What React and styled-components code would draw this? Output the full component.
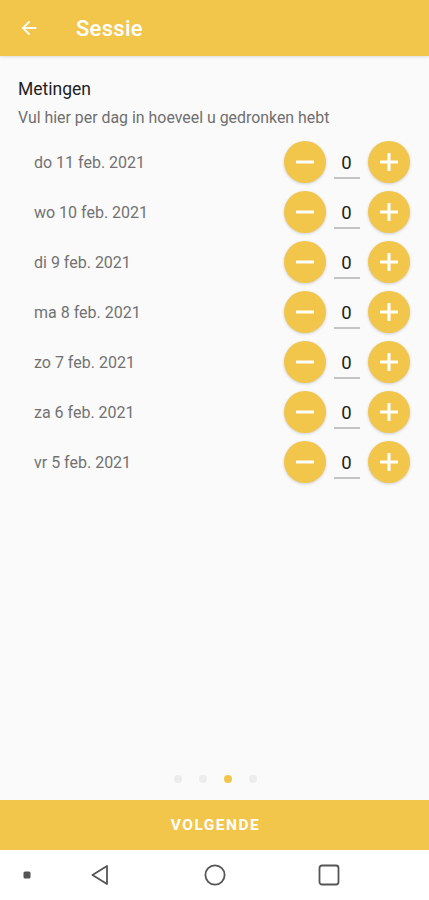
import React, { useState } from 'react';
import styled, { createGlobalStyle } from 'styled-components';

const GlobalStyle = createGlobalStyle`
  html, body {
    margin: 0;
    padding: 0;
    background: #fafafa;
  }
  * {
    box-sizing: border-box;
  }
`;

const YELLOW = '#f2c64b';

const Screen = styled.div`
  width: 429px;
  height: 900px;
  display: flex;
  flex-direction: column;
  background: #fafafa;
  font-family: Roboto, "Noto Sans", sans-serif;
`;

const AppBar = styled.header`
  height: 56px;
  background: ${YELLOW};
  display: flex;
  align-items: center;
  padding-left: 18px;
  box-shadow: 0 1px 3px rgba(0, 0, 0, 0.12);
`;

const BackButton = styled.div`
  width: 22px;
  height: 22px;
  display: flex;
  align-items: center;
  justify-content: center;
  margin-right: 36px;
`;

const Title = styled.h1`
  margin: 0;
  color: #fff;
  font-size: 22px;
  font-weight: 500;
  letter-spacing: 0.3px;
`;

const Content = styled.main`
  flex: 1;
  display: flex;
  flex-direction: column;
  padding: 22px 20px 0 18px;
`;

const Heading = styled.h2`
  margin: 0;
  font-size: 17.5px;
  font-weight: 400;
  color: #232323;
  line-height: 22px;
`;

const Subtitle = styled.p`
  margin: 8px 0 0;
  font-size: 15.9px;
  color: #6f6f6f;
  line-height: 20px;
`;

const List = styled.div`
  display: flex;
  flex-direction: column;
  margin-top: 9px;
`;

const Row = styled.div`
  height: 50px;
  display: flex;
  align-items: center;
  justify-content: space-between;
  padding-left: 16px;
`;

const DateLabel = styled.span`
  font-size: 16px;
  color: #727272;
`;

const Counter = styled.div`
  display: flex;
  align-items: center;
  gap: 8px;
  margin-right: -1px;
`;

const RoundButton = styled.button`
  width: 42px;
  height: 42px;
  border-radius: 50%;
  border: none;
  padding: 0;
  background: ${YELLOW};
  display: flex;
  align-items: center;
  justify-content: center;
  box-shadow: 0 1px 3px rgba(0, 0, 0, 0.18);
  cursor: pointer;
`;

const Value = styled.div`
  width: 26px;
  height: 34px;
  display: flex;
  align-items: center;
  justify-content: center;
  font-size: 18.5px;
  color: #222;
  border-bottom: 2px solid #c4c4c4;
  padding: 3px 1px 0 0;
`;

const Pager = styled.div`
  display: flex;
  justify-content: center;
  gap: 17px;
  padding-bottom: 17px;
  margin-left: 4px;
`;

const Dot = styled.span`
  width: 8px;
  height: 8px;
  border-radius: 50%;
  background: ${(p) => (p.$active ? YELLOW : '#ececec')};
`;

const NextButton = styled.button`
  height: 50px;
  border: none;
  background: ${YELLOW};
  color: #fff;
  font-family: Roboto, "Noto Sans", sans-serif;
  font-size: 15.5px;
  font-weight: 700;
  letter-spacing: 1.5px;
  padding: 0 0 0 2px;
`;

const NavBar = styled.nav`
  height: 50px;
  background: #fff;
  display: grid;
  grid-template-columns: 54px 92px 137px 92px 54px;
  align-items: center;
  justify-items: center;
`;

const MinusIcon = () => (
  <svg width="20" height="20" viewBox="0 0 20 20">
    <rect x="1" y="8.5" width="18" height="3" fill="#fff" rx="0.5" />
  </svg>
);

const PlusIcon = () => (
  <svg width="20" height="20" viewBox="0 0 20 20">
    <rect x="1" y="8.5" width="18" height="3" fill="#fff" rx="0.5" />
    <rect x="8.5" y="1" width="3" height="18" fill="#fff" rx="0.5" />
  </svg>
);

const days = [
  'do 11 feb. 2021',
  'wo 10 feb. 2021',
  'di 9 feb. 2021',
  'ma 8 feb. 2021',
  'zo 7 feb. 2021',
  'za 6 feb. 2021',
  'vr 5 feb. 2021',
];

function DayRow({ label }) {
  const [count, setCount] = useState(0);
  return (
    <Row>
      <DateLabel>{label}</DateLabel>
      <Counter>
        <RoundButton onClick={() => setCount(Math.max(0, count - 1))}>
          <MinusIcon />
        </RoundButton>
        <Value>{count}</Value>
        <RoundButton onClick={() => setCount(count + 1)}>
          <PlusIcon />
        </RoundButton>
      </Counter>
    </Row>
  );
}

export default function App() {
  return (
    <Screen>
      <GlobalStyle />
      <AppBar>
        <BackButton>
          <svg width="22" height="22" viewBox="0 0 24 24">
            <path
              d="M20 11H7.83l5.59-5.59L12 4l-8 8 8 8 1.41-1.41L7.83 13H20v-2z"
              fill="#fff"
            />
          </svg>
        </BackButton>
        <Title>Sessie</Title>
      </AppBar>
      <Content>
        <Heading>Metingen</Heading>
        <Subtitle>Vul hier per dag in hoeveel u gedronken hebt</Subtitle>
        <List>
          {days.map((d) => (
            <DayRow key={d} label={d} />
          ))}
        </List>
        <div style={{ flex: 1 }} />
        <Pager>
          <Dot />
          <Dot />
          <Dot $active />
          <Dot />
        </Pager>
      </Content>
      <NextButton>VOLGENDE</NextButton>
      <NavBar>
        <svg width="8" height="8" viewBox="0 0 8 8">
          <rect x="0.5" y="0.5" width="7" height="7" rx="1.5" fill="#555" />
        </svg>
        <svg width="20" height="22" viewBox="0 0 20 22">
          <path d="M17 2 L2.5 11 L17 20 Z" fill="none" stroke="#555" strokeWidth="1.8" strokeLinejoin="round" />
        </svg>
        <svg width="22" height="22" viewBox="0 0 22 22">
          <circle cx="11" cy="11" r="9.6" fill="none" stroke="#555" strokeWidth="1.8" />
        </svg>
        <svg width="22" height="22" viewBox="0 0 22 22">
          <rect x="1.5" y="1.5" width="19" height="19" rx="2.5" fill="none" stroke="#555" strokeWidth="1.8" />
        </svg>
        <span />
      </NavBar>
    </Screen>
  );
}
